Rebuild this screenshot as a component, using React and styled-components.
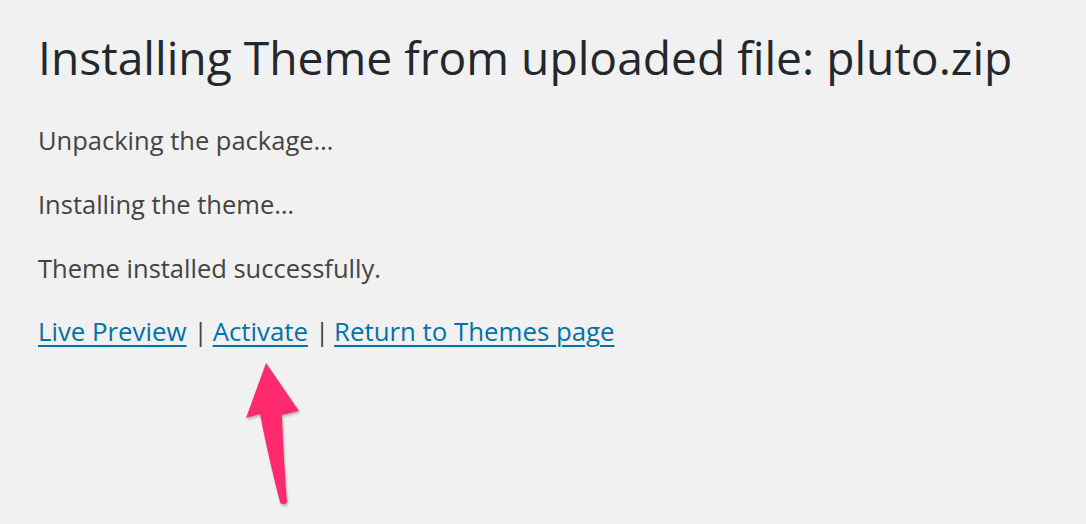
import React from 'react'
import styled, { createGlobalStyle } from 'styled-components'

const GlobalStyle = createGlobalStyle`
  html, body {
    margin: 0;
    padding: 0;
    background: #f1f1f1;
  }
  body {
    font-family: "Open Sans", "Liberation Sans", sans-serif;
    color: #444;
  }
`

const Wrap = styled.div`
  position: relative;
  width: 1086px;
  height: 524px;
  overflow: hidden;
  padding: 28px 0 0 38px;
  box-sizing: border-box;
`

const Title = styled.h1`
  margin: 0 0 33px;
  font-size: 46.2px;
  font-weight: 400;
  line-height: 1.3;
  color: #23282d;
`

const Line = styled.p`
  margin: 0 0 25.5px;
  font-size: ${p => (p.$links ? '25.8px' : '25.5px')};
  line-height: 38.25px;
`

const Link = styled.a`
  color: #0073aa;
  text-decoration: underline;
  text-underline-offset: 4px;
  text-decoration-thickness: 2px;
  cursor: pointer;
`

const Sep = styled.span`
  margin: 0 5px 0 7px;
  color: #444;
`

const Arrow = styled.svg`
  position: absolute;
  left: 240px;
  top: 358px;
  filter: drop-shadow(1px 2px 1px rgba(0, 0, 0, 0.25));
`

export default function App() {
  return (
    <Wrap>
      <GlobalStyle />
      <Title>Installing Theme from uploaded file: pluto.zip</Title>
      <Line>Unpacking the package…</Line>
      <Line>Installing the theme…</Line>
      <Line>Theme installed successfully.</Line>
      <Line $links>
        <Link>Live Preview</Link>
        <Sep>|</Sep>
        <Link>Activate</Link>
        <Sep>|</Sep>
        <Link>Return to Themes page</Link>
      </Line>
      <Arrow width="70" height="152" viewBox="240 358 70 152">
        <path
          d="M266 363 L299 411 L282 415 C283 445 285 475 287 502 C286 505 281 505 280 502 C273 475 266 445 260 414 L246 418 Z"
          fill="#ff2a6d"
        />
      </Arrow>
    </Wrap>
  )
}
